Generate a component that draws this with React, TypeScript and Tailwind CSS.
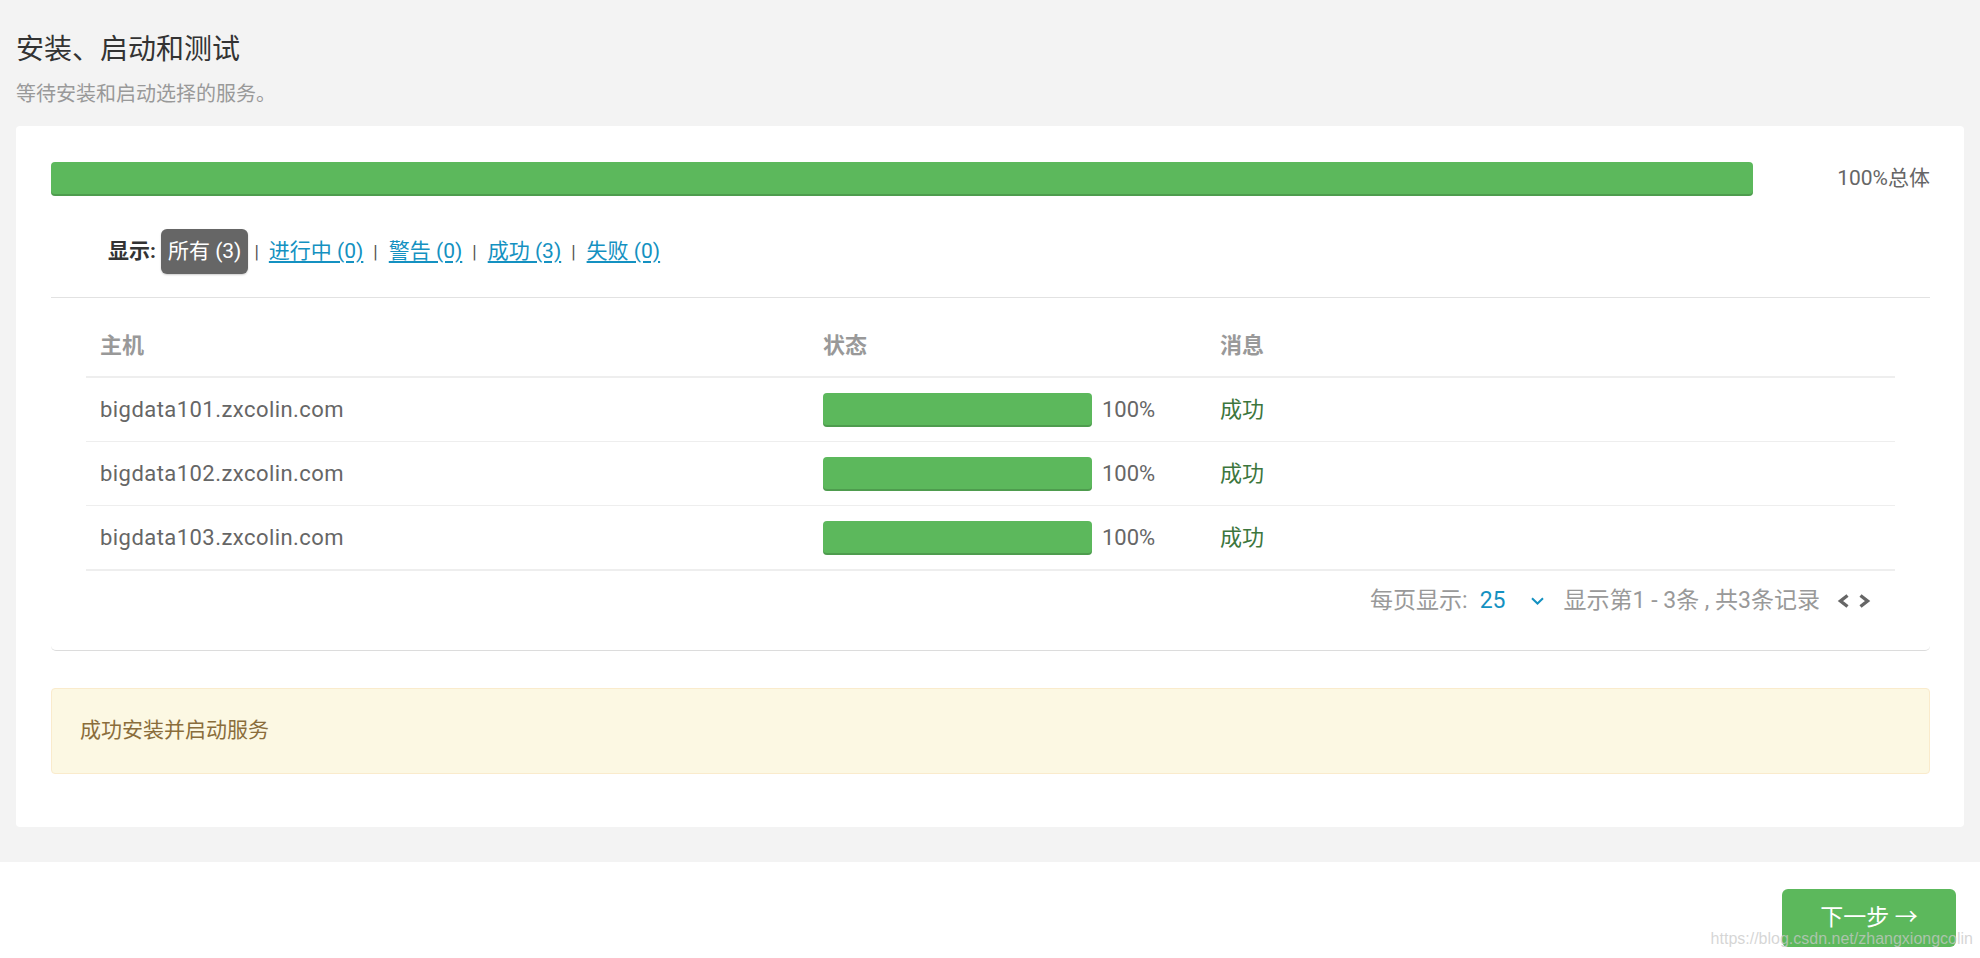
import React from "react";

const font = "font-['Roboto','Noto_Sans_CJK_SC',sans-serif]";

const hosts = [
  "bigdata101.zxcolin.com",
  "bigdata102.zxcolin.com",
  "bigdata103.zxcolin.com",
];

const filters = ["进行中 (0)", "警告 (0)", "成功 (3)", "失败 (0)"];

const Bar = ({ className }: { className?: string }) => (
  <div
    className={
      "rounded-[4px] bg-[#5cb85c] shadow-[inset_0_-2px_0_rgba(0,0,0,0.15)] " +
      (className ?? "")
    }
  />
);

const Chevron = ({ dir }: { dir: "left" | "right" }) => (
  <svg width="13" height="14" viewBox="0 0 13 14" className="block">
    <path
      d={dir === "left" ? "M10.5 1.5L3.5 7L10.5 12.5" : "M2.5 1.5L9.5 7L2.5 12.5"}
      fill="none"
      stroke="#666"
      strokeWidth="3.4"
    />
  </svg>
);

export default function App() {
  return (
    <div className={`${font} min-h-[958px] bg-white`}>
      {/* Gray page area */}
      <div className="bg-[#f3f3f3] pb-[35px]">
        <div className="px-4 pt-[34px] pb-[20px]">
          <h2 className="text-[28px] leading-[31px] text-[#333]">安装、启动和测试</h2>
          <p className="mt-[17px] text-[20px] leading-[24px] text-[#999]">
            等待安装和启动选择的服务。
          </p>
        </div>

        <div className="mx-4 rounded-[4px] bg-white pl-[35px] pr-[34px] pt-[36px] pb-[53px]">
          {/* Overall progress */}
          <div className="flex items-center">
            <Bar className="h-[34px] flex-1" />
            <div className="w-[177px] flex-none text-right text-[21px] text-[#666]">100%总体</div>
          </div>

          {/* Filter */}
          <div className="mt-[33px] flex h-[45px] items-center pl-[57px] text-[21px]">
            <span className="font-bold text-[#333]">显示:</span>
            <span className="ml-[5px] flex h-[45px] items-center rounded-[6px] bg-[#666] px-[7px] text-white shadow-[0_1px_2px_rgba(0,0,0,0.2)]">
              所有 (3)
            </span>
            {filters.map((f, i) => (
              <React.Fragment key={f}>
                <span
                  className={
                    "text-[18px] text-[#555] " +
                    (i === 0 ? "ml-[6px] mr-[10px]" : "ml-[10px] mr-[11px]")
                  }
                >
                  |
                </span>
                <a className="cursor-pointer text-[#1491c1] underline underline-offset-[3px]">{f}</a>
              </React.Fragment>
            ))}
          </div>

          {/* Hosts table */}
          <div className="mt-[23px] rounded-b-[5px] border-t border-b border-[#e2e2e2] border-b-[#dcdcdc] px-[35px] pt-[17px] pb-[19px]">
            <div className="grid h-[63px] grid-cols-[723px_397px_1fr] items-center border-b-2 border-[#eee] text-[22px] font-bold text-[#999]">
              <div className="px-[14px]">主机</div>
              <div className="px-[14px]">状态</div>
              <div className="px-[14px]">消息</div>
            </div>
            {hosts.map((h, i) => (
              <div
                key={h}
                className={
                  "grid grid-cols-[723px_397px_1fr] items-center text-[22px] " +
                  (i === hosts.length - 1
                    ? "h-[65px] border-b-2 border-[#eee]"
                    : "h-[64px] border-b border-[#eee]")
                }
              >
                <div className="px-[14px] tracking-[0.45px] text-[#666]">{h}</div>
                <div className="flex items-center px-[14px]">
                  <Bar className="h-[34px] w-[269px]" />
                  <span className="ml-[10px] text-[#666]">100%</span>
                </div>
                <div className="px-[14px] text-[#3c763d]">成功</div>
              </div>
            ))}

            {/* Pagination */}
            <div className="flex h-[60px] items-center justify-end pr-[24px] text-[23px] text-[#999]">
              <span>每页显示:</span>
              <span className="ml-[12px] text-[#1491c1]">25</span>
              <svg width="13" height="8" viewBox="0 0 13 8" className="ml-[25px]">
                <path d="M1 1.2L6.5 6.5L12 1.2" fill="none" stroke="#1491c1" strokeWidth="2" />
              </svg>
              <span className="ml-[20px]">显示第1 - 3条 , 共3条记录</span>
              <div className="ml-[17px] flex items-center gap-[8px]">
                <Chevron dir="left" />
                <Chevron dir="right" />
              </div>
            </div>
          </div>

          {/* Alert */}
          <div className="mt-[37px] flex h-[86px] items-center rounded-[4px] border border-[#faebcc] bg-[#fcf8e3] pl-[28px] text-[21px] text-[#8a6d3b]">
            成功安装并启动服务
          </div>
        </div>
      </div>

      {/* Footer */}
      <div className="relative flex h-[96px] justify-end pt-[27px] pr-[24px]">
        <button className="h-[58px] w-[174px] rounded-[6px] bg-[#5cb85c] text-[23px] text-white">
          下一步 →
        </button>
        <span className="pointer-events-none absolute right-[7px] top-[69px] font-['Liberation_Sans',sans-serif] text-[16px] leading-none text-[rgba(200,200,200,0.75)]">
          https://blog.csdn.net/zhangxiongcolin
        </span>
      </div>
    </div>
  );
}
